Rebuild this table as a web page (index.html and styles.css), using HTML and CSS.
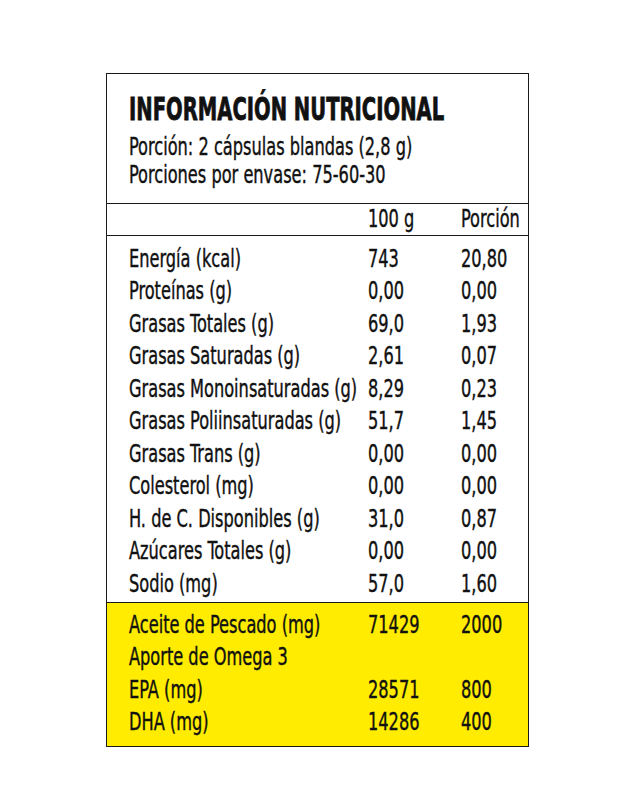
FILE: index.html
```html
<!DOCTYPE html>
<html lang="es">
<head>
<meta charset="utf-8">
<title>Información nutricional</title>
<link rel="stylesheet" href="styles.css">
</head>
<body>
<div class="label">
  <div class="head">
    <div class="title"><span class="c">INFORMACIÓN NUTRICIONAL</span></div>
    <div class="line"><span class="c">Porción: 2 cápsulas blandas (2,8 g)</span></div>
    <div class="line"><span class="c">Porciones por envase: 75-60-30</span></div>
  </div>
  <div class="row colhead"><span></span><span class="c">100 g</span><span class="c">Porción</span></div>
  <div class="body">
    <div class="row"><span class="c">Energía (kcal)</span><span class="c">743</span><span class="c">20,80</span></div>
    <div class="row"><span class="c">Proteínas (g)</span><span class="c">0,00</span><span class="c">0,00</span></div>
    <div class="row"><span class="c">Grasas Totales (g)</span><span class="c">69,0</span><span class="c">1,93</span></div>
    <div class="row"><span class="c">Grasas Saturadas (g)</span><span class="c">2,61</span><span class="c">0,07</span></div>
    <div class="row"><span class="c">Grasas Monoinsaturadas (g)</span><span class="c">8,29</span><span class="c">0,23</span></div>
    <div class="row"><span class="c">Grasas Poliinsaturadas (g)</span><span class="c">51,7</span><span class="c">1,45</span></div>
    <div class="row"><span class="c">Grasas Trans (g)</span><span class="c">0,00</span><span class="c">0,00</span></div>
    <div class="row"><span class="c">Colesterol (mg)</span><span class="c">0,00</span><span class="c">0,00</span></div>
    <div class="row"><span class="c">H. de C. Disponibles (g)</span><span class="c">31,0</span><span class="c">0,87</span></div>
    <div class="row"><span class="c">Azúcares Totales (g)</span><span class="c">0,00</span><span class="c">0,00</span></div>
    <div class="row"><span class="c">Sodio (mg)</span><span class="c">57,0</span><span class="c">1,60</span></div>
  </div>
  <div class="extra">
    <div class="row"><span class="c">Aceite de Pescado (mg)</span><span class="c">71429</span><span class="c">2000</span></div>
    <div class="row"><span class="c">Aporte de Omega 3</span><span></span><span></span></div>
    <div class="row"><span class="c">EPA (mg)</span><span class="c">28571</span><span class="c">800</span></div>
    <div class="row"><span class="c">DHA (mg)</span><span class="c">14286</span><span class="c">400</span></div>
  </div>
</div>
</body>
</html>
```
FILE: styles.css
```css
html, body {
  margin: 0;
  padding: 0;
  background: #fff;
}
body {
  font-family: "DejaVu Sans Condensed", "DejaVu Sans", sans-serif;
  color: #111;
  font-size: 24px;
}
.label {
  box-sizing: border-box;
  width: 423px;
  margin: 73px 0 0 106px;
  border: 1px solid #1a1a1a;
}
.c {
  display: inline-block;
  white-space: nowrap;
  transform: scaleX(0.75);
  transform-origin: 0 50%;
  -webkit-text-stroke: 0.4px #111;
}
.head {
  padding: 15px 0 14px 22px;
  border-bottom: 1px solid #1a1a1a;
}
.title {
  font-size: 32px;
  font-weight: bold;
  line-height: 40px;
  margin-bottom: 4px;
}
.title .c {
  transform: scaleX(0.68);
  -webkit-text-stroke: 0.8px #111;
}
.line {
  line-height: 28px;
}
.row {
  display: grid;
  grid-template-columns: 239px 93px 1fr;
  padding-left: 22px;
  line-height: 32.5px;
  white-space: nowrap;
}
.colhead {
  line-height: 31px;
  border-bottom: 1px solid #1a1a1a;
}
.body {
  padding: 6.5px 0 2px;
  border-bottom: 1px solid #1a1a1a;
}
.extra {
  background: #ffec00;
  padding: 5.5px 0 7px;
}
```
